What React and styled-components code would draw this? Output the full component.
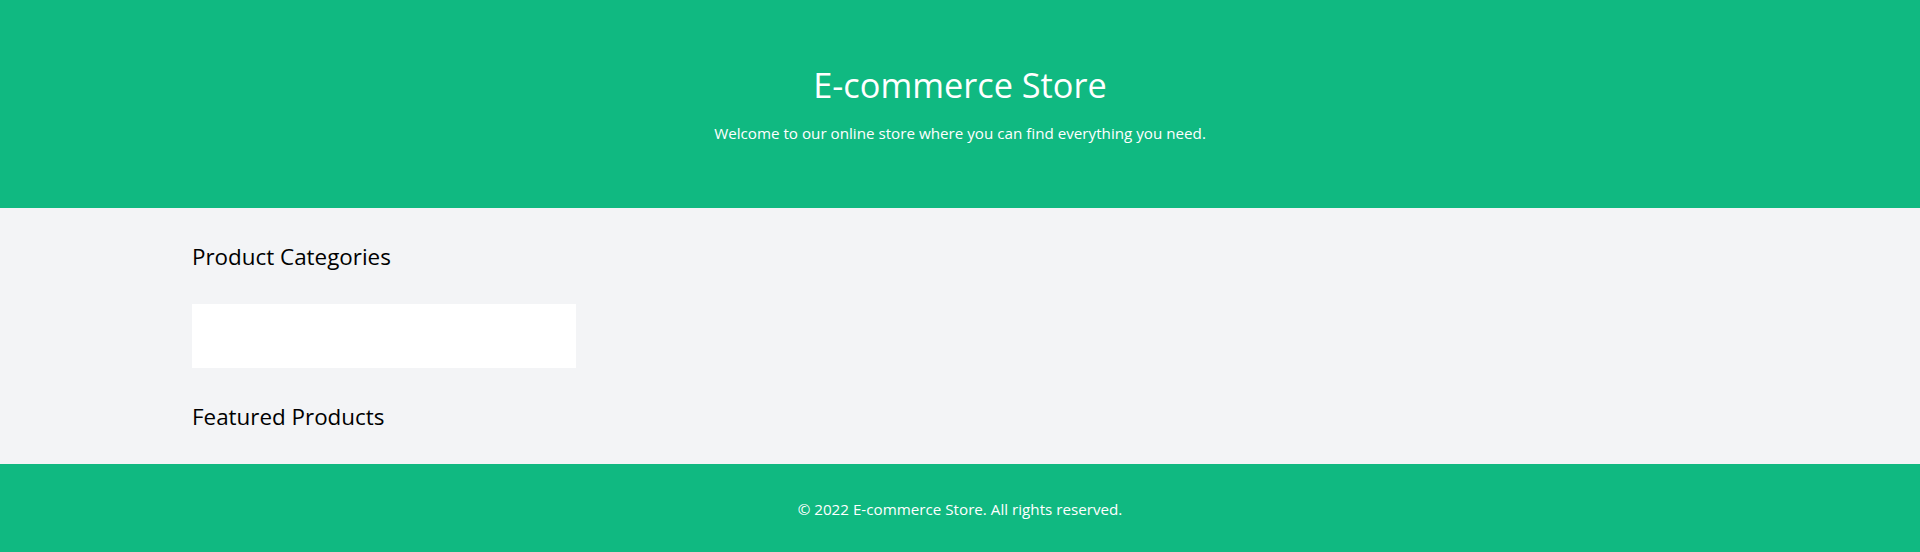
import React from "react";
import styled, { createGlobalStyle } from "styled-components";

const Global = createGlobalStyle`
  html, body { margin: 0; padding: 0; }
  body {
    font-family: "Open Sans", "Noto Sans", sans-serif;
    background: #f3f4f6;
    color: #000;
  }
  * { box-sizing: border-box; }
`;

const Header = styled.header`
  background: #10b981;
  color: #fff;
  padding: 64px 0;
  text-align: center;
`;

const Title = styled.h1`
  margin: 0 0 16px;
  padding-top: 1px;
  height: 40px;
  font-size: 34.3px;
  line-height: 40px;
  font-weight: 400;
`;

const Subtitle = styled.p`
  margin: 0;
  padding-top: 1px;
  height: 24px;
  font-size: 15.2px;
  line-height: 24px;
`;

const Main = styled.main`
  background: #f3f4f6;
  padding: 32px 0;
`;

const Container = styled.div`
  max-width: 1536px;
  margin: 0 auto;
`;

const SectionTitle = styled.h2`
  margin: 0 0 32px;
  padding-top: 1px;
  height: 32px;
  font-size: 22.4px;
  line-height: 32px;
  font-weight: 400;
  &:last-child { margin-bottom: 0; }
`;

const CategoryCard = styled.div`
  width: 384px;
  height: 64px;
  background: #fff;
  margin-bottom: 32px;
`;

const Footer = styled.footer`
  background: #10b981;
  color: #fff;
  padding: 32px 0;
  text-align: center;
  font-size: 15.2px;
  line-height: 24px;
`;

const FooterText = styled.p`
  margin: 0;
  padding-top: 1px;
  height: 24px;
`;

export default function App() {
  return (
    <>
      <Global />
      <Header>
        <Title>E-commerce Store</Title>
        <Subtitle>Welcome to our online store where you can find everything you need.</Subtitle>
      </Header>
      <Main>
        <Container>
          <SectionTitle>Product Categories</SectionTitle>
          <CategoryCard />
          <SectionTitle>Featured Products</SectionTitle>
        </Container>
      </Main>
      <Footer>
        <FooterText>© 2022 E-commerce Store. All rights reserved.</FooterText>
      </Footer>
    </>
  );
}
